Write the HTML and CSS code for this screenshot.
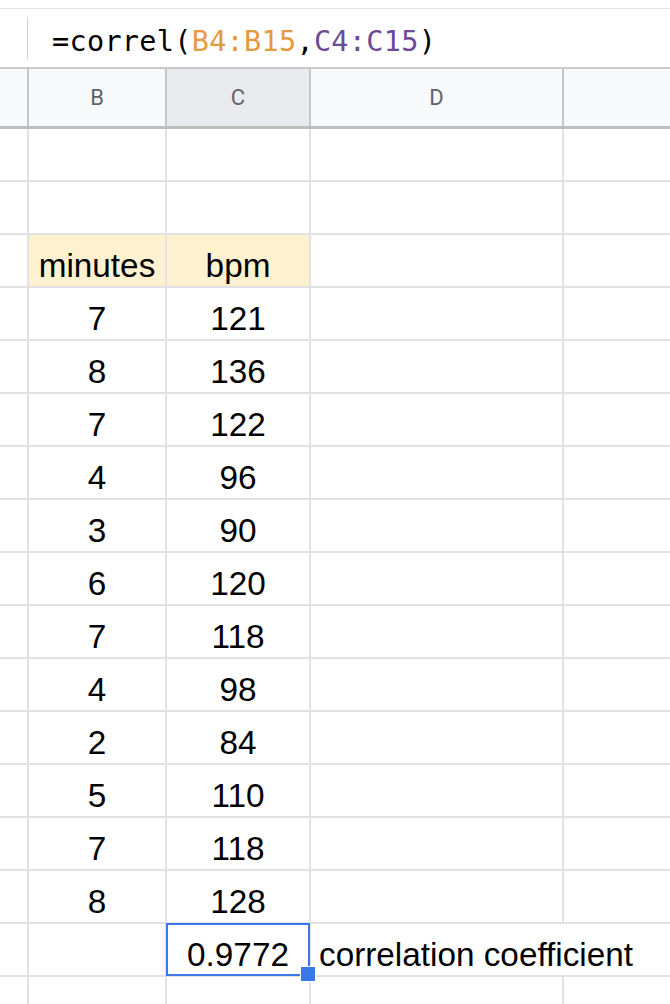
FILE: index.html
```html
<!DOCTYPE html>
<html>
<head>
<meta charset="utf-8">
<link rel="stylesheet" href="styles.css">
</head>
<body>
<div class="sheet">
  <div class="formula-bar">
    <div class="fx-gutter"></div>
    <div class="formula">=correl(<span class="ref-b">B4:B15</span>,<span class="ref-c">C4:C15</span>)</div>
  </div>
  <div class="grid col-headers">
    <div class="hcell"></div>
    <div class="hcell">B</div>
    <div class="hcell active">C</div>
    <div class="hcell">D</div>
    <div class="hcell"></div>
  </div>
  <div class="grid body">
    <div class="cell"></div><div class="cell"></div><div class="cell"></div><div class="cell"></div><div class="cell"></div>
    <div class="cell"></div><div class="cell"></div><div class="cell"></div><div class="cell"></div><div class="cell"></div>
    <div class="cell"></div><div class="cell c yellow">minutes</div><div class="cell c yellow">bpm</div><div class="cell"></div><div class="cell"></div>
    <div class="cell"></div><div class="cell c">7</div><div class="cell c">121</div><div class="cell"></div><div class="cell"></div>
    <div class="cell"></div><div class="cell c">8</div><div class="cell c">136</div><div class="cell"></div><div class="cell"></div>
    <div class="cell"></div><div class="cell c">7</div><div class="cell c">122</div><div class="cell"></div><div class="cell"></div>
    <div class="cell"></div><div class="cell c">4</div><div class="cell c">96</div><div class="cell"></div><div class="cell"></div>
    <div class="cell"></div><div class="cell c">3</div><div class="cell c">90</div><div class="cell"></div><div class="cell"></div>
    <div class="cell"></div><div class="cell c">6</div><div class="cell c">120</div><div class="cell"></div><div class="cell"></div>
    <div class="cell"></div><div class="cell c">7</div><div class="cell c">118</div><div class="cell"></div><div class="cell"></div>
    <div class="cell"></div><div class="cell c">4</div><div class="cell c">98</div><div class="cell"></div><div class="cell"></div>
    <div class="cell"></div><div class="cell c">2</div><div class="cell c">84</div><div class="cell"></div><div class="cell"></div>
    <div class="cell"></div><div class="cell c">5</div><div class="cell c">110</div><div class="cell"></div><div class="cell"></div>
    <div class="cell"></div><div class="cell c">7</div><div class="cell c">118</div><div class="cell"></div><div class="cell"></div>
    <div class="cell"></div><div class="cell c">8</div><div class="cell c">128</div><div class="cell"></div><div class="cell"></div>
    <div class="cell"></div><div class="cell"></div><div class="cell c selected">0.9772<span class="handle"></span></div><div class="cell span2">correlation coefficient</div>
    <div class="cell"></div><div class="cell"></div><div class="cell"></div><div class="cell"></div><div class="cell"></div>
  </div>
</div>
</body>
</html>
```

FILE: styles.css
```css
html, body {
  margin: 0;
  padding: 0;
  background: #ffffff;
}

.sheet {
  width: 670px;
  height: 1004px;
  overflow: hidden;
  background: #ffffff;
}

.formula-bar {
  margin-top: 8px;
  border-top: 1px solid #e3e3e3;
  height: 58px;
  display: flex;
  align-items: center;
}

.fx-gutter {
  width: 27px;
  height: 42px;
  border-right: 1px solid #cfcfcf;
  flex: none;
}

.formula {
  margin-left: 24px;
  padding-top: 6px;
  font-family: "DejaVu Sans Mono", "Liberation Mono", monospace;
  font-size: 28.5px;
  letter-spacing: 0.3px;
  color: #000000;
  white-space: nowrap;
}

.ref-b { color: #e69a3f; }
.ref-c { color: #6d4a96; }

.grid {
  display: grid;
  grid-template-columns: 27px 136px 142px 251px 1fr;
  column-gap: 2px;
}

.col-headers {
  background: #c6c6c6;
  border-top: 2px solid #c9c9c9;
  border-bottom: 3px solid #bdbdbd;
  height: 57px;
}

.hcell {
  background: #f8f9fa;
  display: flex;
  align-items: center;
  justify-content: center;
  font-family: Roboto, "Liberation Sans", sans-serif;
  font-size: 22px;
  color: #5f6368;
}

.hcell.active {
  background: #e8eaed;
}

.body {
  background: #e2e2e2;
  row-gap: 2px;
  grid-auto-rows: 51px;
  padding-bottom: 2px;
}

.cell {
  background: #ffffff;
  position: relative;
  display: flex;
  align-items: flex-end;
  padding-left: 8px;
  padding-bottom: 1px;
  box-sizing: border-box;
  font-family: "Liberation Sans", Arial, sans-serif;
  font-size: 33.3px;
  color: #000000;
  white-space: nowrap;
}

.cell.c {
  justify-content: center;
  padding-left: 0;
}

.cell.yellow {
  background: #fdf1cf;
}

.cell.span2 {
  grid-column: span 2;
}

.cell.selected::after {
  content: "";
  position: absolute;
  left: -1px;
  top: -1px;
  right: -1px;
  bottom: -1px;
  border: 2px solid #3b78e7;
  pointer-events: none;
  z-index: 1;
}

.handle {
  position: absolute;
  right: -7px;
  bottom: -7px;
  width: 14px;
  height: 14px;
  background: #3b78e7;
  border: 1px solid #ffffff;
  z-index: 2;
}
```
